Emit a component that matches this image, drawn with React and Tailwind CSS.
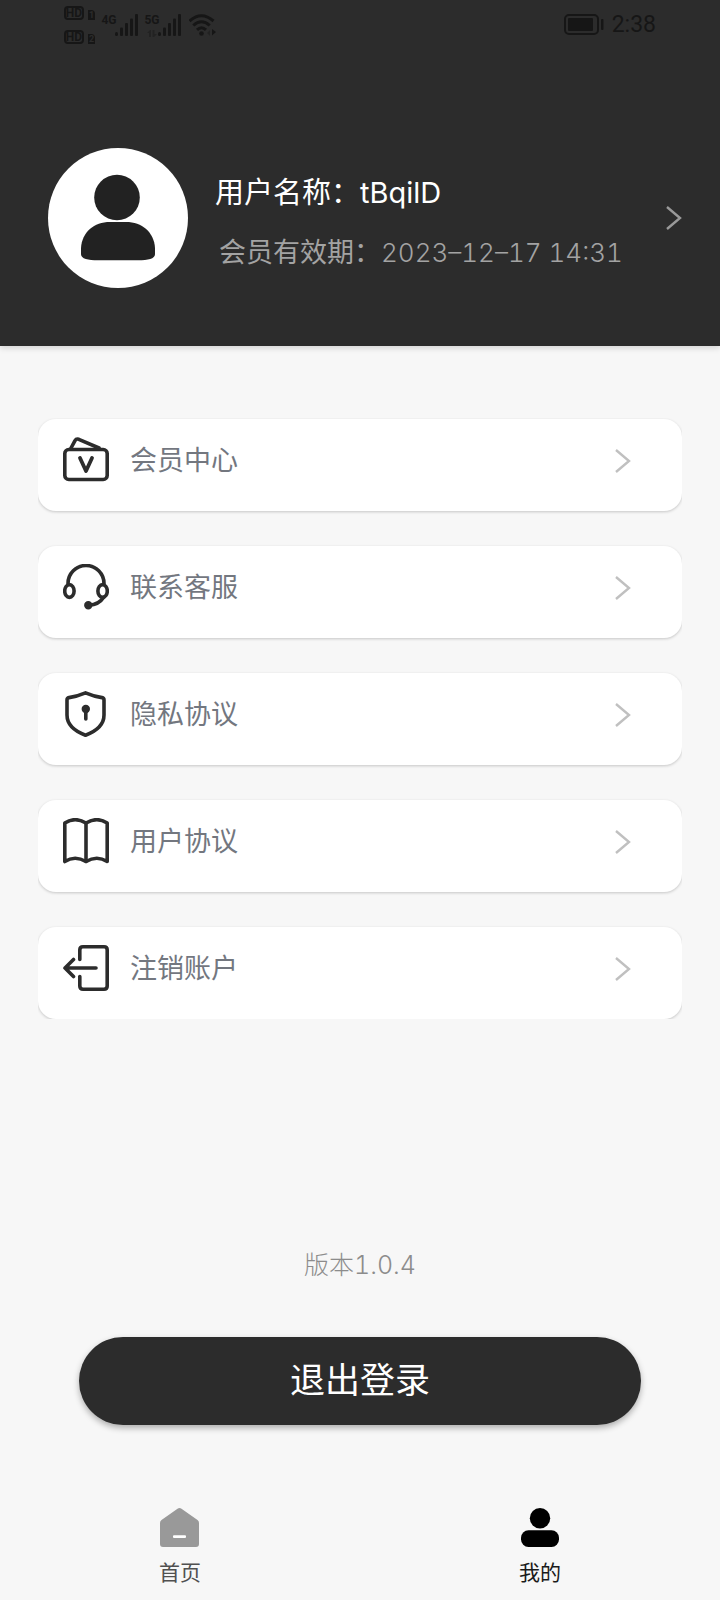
import React, { useState } from "react";

function CardIcon() {
  return (
    <>
      <rect x="1.8" y="12.5" width="42.4" height="30" rx="4" />
      <path d="M7.5 12 L12 3.6 Q13.3 1.4 15.8 2.3 L36 11" />
      <path d="M17 21 L23 34 L29 21" strokeWidth="3.8" />
    </>
  );
}

function HeadsetIcon() {
  return (
    <>
      <path d="M5 19.5 A18 18 0 0 1 41 19.5" />
      <ellipse cx="6.4" cy="27" rx="4.7" ry="6.4" />
      <ellipse cx="39.6" cy="27" rx="4.7" ry="6.4" />
      <path d="M40.5 33.5 Q36 40.5 26 41.3" />
      <circle cx="25.3" cy="41.3" r="2.4" fill="currentColor" />
    </>
  );
}

function ShieldIcon() {
  return (
    <>
      <path d="M22.5 1.8 Q31 5.4 39 6.6 Q41 7 41 9 V24 C41 34.5 31 41 22.5 44.2 C14 41 4 34.5 4 24 V9 Q4 7 6 6.6 Q14 5.4 22.5 1.8 Z" />
      <circle cx="22.8" cy="18" r="2.4" fill="currentColor" />
      <path d="M22.8 18 V28" />
    </>
  );
}

function BookIcon() {
  return (
    <>
      <path d="M1.8 43.5 V5 Q12 -1.6 23 5 Q34 -1.6 44.2 5 V43.5 Q34 37 23 43.5 Q12 37 1.8 43.5 Z" />
      <path d="M23 5 V43.5" />
    </>
  );
}

function ExitIcon() {
  return (
    <>
      <path d="M16.8 14.5 V5 Q16.8 1.8 20 1.8 H41 Q44.2 1.8 44.2 5 V41 Q44.2 44.2 41 44.2 H20 Q16.8 44.2 16.8 41 V31.5" />
      <path d="M2 23 H33 M10.5 14.5 L2 23 L10.5 31.5" />
    </>
  );
}

const menu = [
  { label: "会员中心", icon: CardIcon },
  { label: "联系客服", icon: HeadsetIcon },
  { label: "隐私协议", icon: ShieldIcon },
  { label: "用户协议", icon: BookIcon },
  { label: "注销账户", icon: ExitIcon },
];

function Chevron({ className }) {
  return (
    <svg className={className} width="16" height="24" viewBox="0 0 16 24" fill="none" stroke="currentColor" strokeWidth="2.4">
      <path d="M1 1 L14 12 L1 23" />
    </svg>
  );
}

function HdBadge({ sim }) {
  return (
    <div className="flex items-end gap-1">
      <span className="flex h-[14px] w-5 items-center justify-center rounded-sm border-2 border-[#161616] text-xs leading-none font-bold">
        HD
      </span>
      <span className="flex h-[10px] w-[7px] items-center justify-center rounded-tr-sm bg-[#161616] text-[9px] leading-none font-bold text-[#2c2c2c]">
        {sim}
      </span>
    </div>
  );
}

function Signal({ label, arrows }) {
  return (
    <div className="flex">
      <div className="flex w-3 flex-col items-center">
        <span className="text-xs leading-3 font-bold">{label}</span>
        {arrows && (
          <svg className="mt-1" width="10" height="7" viewBox="0 0 10 7" fill="#222">
            <path d="M0 3 L3 0 H4 V7 H2 V3 Z M5.5 0 H7.5 V4 H10 L7 7 H5.5 Z" />
          </svg>
        )}
      </div>
      <svg width="23" height="22" viewBox="0 0 23 22" fill="currentColor">
        <rect x="0" y="18" width="3" height="4" rx="1.5" />
        <rect x="5" y="13.5" width="3" height="8.5" rx="1" />
        <rect x="10" y="9" width="3" height="13" rx="1" />
        <rect x="15" y="4.5" width="3" height="17.5" rx="1" />
        <rect x="20" y="0" width="3" height="22" rx="1" />
      </svg>
    </div>
  );
}

function StatusBar() {
  return (
    <div className="flex h-[50px] items-center justify-between px-16 font-[Roboto,sans-serif] text-[#161616]">
      <div className="flex items-center gap-2">
        <div className="flex flex-col gap-[10px]">
          <HdBadge sim="1" />
          <HdBadge sim="2" />
        </div>
        <Signal label="4G" />
        <Signal label="5G" arrows />
        <svg width="28" height="22" viewBox="0 0 28 22" fill="none" stroke="currentColor" strokeWidth="3">
          <path d="M0.5 7 Q12.5 -3.5 24.5 7" />
          <path d="M4.3 11.5 Q12.5 4 20.7 11.5" />
          <path d="M8 15.8 Q12.5 11.6 17 15.8" />
          <circle cx="12.5" cy="19.5" r="2.3" fill="currentColor" stroke="none" />
          <path d="M18 19 L21 16 V22 Z" fill="#222" stroke="none" />
          <path d="M23 15 L27 18 L23 21.5 Z" fill="currentColor" stroke="none" />
        </svg>
      </div>
      <div className="flex items-center gap-2">
        <svg width="40" height="22" viewBox="0 0 40 22" fill="none">
          <rect x="1" y="1" width="33" height="19" rx="4" stroke="currentColor" strokeWidth="2" />
          <rect x="4" y="4" width="25" height="13" rx="1" fill="currentColor" />
          <rect x="37" y="5" width="2.5" height="11" rx="1" fill="currentColor" />
        </svg>
        <time className="text-[23px] leading-7">2:38</time>
      </div>
    </div>
  );
}

export default function App() {
  const [tab, setTab] = useState("mine");

  return (
    <div className="flex min-h-screen flex-col bg-[#f7f7f7] font-[Inter,'Noto_Sans_CJK_SC',sans-serif] tabular-nums">
      <header className="bg-[#2c2c2c] shadow-[0_2px_6px_rgba(0,0,0,0.15)]">
        <StatusBar />
        <button className="flex w-full items-center pt-[98px] pr-[38px] pb-[58px] pl-12 text-left">
          <svg className="shrink-0" width="140" height="140" viewBox="0 0 140 140">
            <circle cx="70" cy="70" r="70" fill="#fff" />
            <circle cx="69" cy="49.5" r="22.8" fill="#222" />
            <path
              fill="#222"
              d="M33 106 V100 C34 84 46 74 62 74 H78 C94 74 106 84 107 100 V106 C107 111 100 112.3 90 112.3 H50 C40 112.3 33 111 33 106 Z"
            />
          </svg>
          <div className="flex flex-1 flex-col gap-5 pt-[10px] pl-[27px]">
            <p className="text-[29px] leading-10 text-white">用户名称：tBqilD</p>
            <p className="pl-1 text-[27px] leading-10 text-[#a3a3a3]">
              会员有效期：<time className="text-[26px] font-light">2023–12–17 14:31</time>
            </p>
          </div>
          <Chevron className="shrink-0 text-[#999]" />
        </button>
      </header>

      <main className="flex flex-1 flex-col">
        <nav className="mx-[38px] mt-[72px] flex flex-col gap-[35px] overflow-hidden pt-px">
          {menu.map(({ label, icon: Icon }) => (
            <button
              key={label}
              className="flex h-[92px] items-center rounded-[18px] bg-white pr-[51px] pb-2 pl-[25px] shadow-[0_1px_3px_rgba(0,0,0,0.2)]"
            >
              <svg
                className="mb-[2px] shrink-0 text-[#2c2c2c]"
                width="46"
                height="46"
                viewBox="0 0 46 46"
                fill="none"
                stroke="currentColor"
                strokeWidth="3.6"
                strokeLinecap="round"
                strokeLinejoin="round"
              >
                <Icon />
              </svg>
              <span className="flex-1 pl-[21px] text-left text-[27px] leading-10 text-[#73777f]">{label}</span>
              <Chevron className="shrink-0 text-[#c0c0c0]" />
            </button>
          ))}
        </nav>

        <p className="mt-auto text-center text-[25px] leading-8 font-light text-[#8c8c8c]">版本1.0.4</p>
        <button className="mx-[79px] mt-14 mb-[83px] h-[88px] rounded-full bg-[#2c2c2c] pb-[2px] text-[35px] leading-none text-white shadow-[0_3px_6px_rgba(0,0,0,0.3)]">
          退出登录
        </button>
      </main>

      {/* Bottom tabs */}
      <footer className="grid grid-cols-2 pb-[13px] text-[21px] leading-7">
        <button onClick={() => setTab("home")} className="flex flex-col items-center gap-3">
          <svg width="40" height="39" viewBox="0 0 40 39" fill={tab === "home" ? "#000" : "#999"}>
            <path d="M17.5 0.8 Q19.5 -0.6 21.5 0.8 L37.5 12 Q39 13 39 15 V36 Q39 39 36 39 H3 Q0 39 0 36 V15 Q0 13 1.5 12 Z" />
            <rect x="13" y="27.3" width="13" height="2.7" rx="1" fill="#fff" />
          </svg>
          <span className={tab === "home" ? "text-[#1a1a1a]" : "text-[#505050]"}>首页</span>
        </button>
        <button onClick={() => setTab("mine")} className="flex flex-col items-center gap-3">
          <svg width="38" height="39" viewBox="0 0 38 39" fill={tab === "mine" ? "#000" : "#999"}>
            <circle cx="19" cy="10.2" r="10.2" />
            <rect x="0" y="22.2" width="38" height="16.8" rx="7.5" />
          </svg>
          <span className={tab === "mine" ? "text-[#1a1a1a]" : "text-[#505050]"}>我的</span>
        </button>
      </footer>
    </div>
  );
}
